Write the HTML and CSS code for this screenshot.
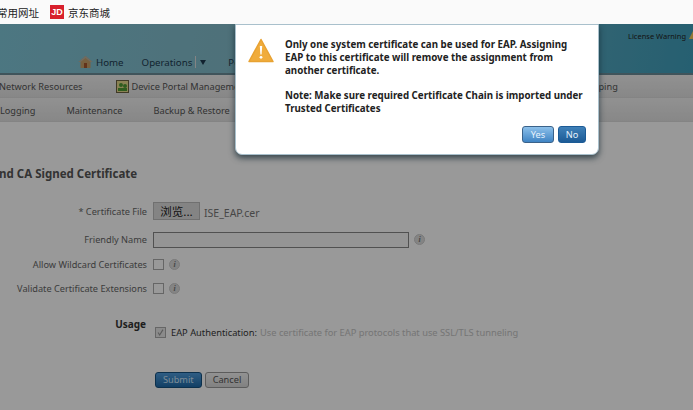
FILE: index.html
```html
<!DOCTYPE html>
<html lang="en">
<head>
    <meta charset="UTF-8">
    <meta name="viewport" content="width=device-width, initial-scale=1.0">
    <title>Bind CA Signed Certificate</title>
    <link rel="stylesheet" href="styles.css">
</head>
<body>
    <div class="bookmarks">
        <span class="bookmark first">常用网址</span>
        <span class="jd-logo">JD</span>
        <span class="bookmark">京东商城</span>
    </div>

    <div class="app">
        <div class="header">
            <div class="license">License Warning <span class="license-icon"></span></div>
            <div class="main-nav">
                <svg class="home-icon" width="15" height="14" viewBox="0 0 15 14">
                    <path d="M7.5 1 L14.5 7 L12.5 7 L12.5 13 L2.5 13 L2.5 7 L0.5 7 Z" fill="#c9a06a"/>
                    <path d="M7.5 1 L14.5 7 L12.5 7 L7.5 3 L2.5 7 L0.5 7 Z" fill="#b9b4a6"/>
                    <rect x="6" y="8" width="3" height="5" fill="#a5552e"/>
                </svg>
                <span class="nav-home">Home</span>
                <span class="nav-ops">Operations</span>
                <span class="nav-sep"></span>
                <span class="nav-arrow"></span>
                <span class="nav-policy">Policy</span>
            </div>
        </div>

        <div class="subnav first-row">
            <span class="net-res">Network Resources</span>
            <svg class="portal-icon" width="13" height="13" viewBox="0 0 13 13">
                <rect x="0.5" y="0.5" width="12" height="12" fill="#e6d98c" stroke="#6b6242"/>
                <circle cx="5" cy="5" r="2" fill="#4f9a35"/>
                <circle cx="9" cy="6" r="2" fill="#4f9a35"/>
                <rect x="2" y="8" width="9" height="3" fill="#4f9a35"/>
            </svg>
            <span>Device Portal Management</span>
            <span class="mapping">Mapping</span>
        </div>
        <div class="subnav second-row">
            <span class="logging">Logging</span>
            <span>Maintenance</span>
            <span>Backup &amp; Restore</span>
        </div>

        <div class="content">
            <h2 class="page-title">Bind CA Signed Certificate</h2>

            <div class="form-row file-row">
                <label class="form-label">* Certificate File</label>
                <span class="browse-btn">浏览...</span>
                <span class="file-name">ISE_EAP.cer</span>
            </div>
            <div class="form-row name-row">
                <label class="form-label">Friendly Name</label>
                <span class="text-input"></span>
                <span class="info-icon">i</span>
            </div>
            <div class="form-row check-row">
                <label class="form-label">Allow Wildcard Certificates</label>
                <span class="checkbox"></span>
                <span class="info-icon">i</span>
            </div>
            <div class="form-row check-row">
                <label class="form-label">Validate Certificate Extensions</label>
                <span class="checkbox"></span>
                <span class="info-icon">i</span>
            </div>

            <div class="form-row usage-row">
                <label class="form-label usage-label">Usage</label>
                <div class="usage-option">
                    <span class="checkbox checked">
                        <svg width="9" height="9" viewBox="0 0 11 11"><path d="M2.5 5.5 L4.5 8.5 L8.5 2" fill="none" stroke="#999" stroke-width="1.4"/></svg>
                    </span>
                    <span class="usage-name">EAP Authentication:</span>
                    <span class="usage-desc">Use certificate for EAP protocols that use SSL/TLS tunneling</span>
                </div>
            </div>

            <div class="form-actions">
                <span class="submit-btn">Submit</span>
                <span class="cancel-btn">Cancel</span>
            </div>
        </div>

        <div class="overlay"></div>

        <div class="dialog">
            <svg class="warn-icon" width="26" height="25" viewBox="0 0 26 25">
                <path d="M13 1.5 L25 23.5 L1 23.5 Z" fill="#f0ac3c" stroke="#e8a232" stroke-width="1.5" stroke-linejoin="round"/>
                <path d="M11.8 8 L14.2 8 L13.6 16.5 L12.4 16.5 Z" fill="#fff"/>
                <circle cx="13" cy="19.3" r="1.4" fill="#fff"/>
            </svg>
            <div class="dialog-body">
                <div class="dialog-text">
                    <p>Only one system certificate can be used for EAP. Assigning<br>EAP to this certificate will remove the assignment from<br>another certificate.</p>
                    <p>Note: Make sure required Certificate Chain is imported under<br>Trusted Certificates</p>
                </div>
                <div class="dialog-buttons">
                    <span class="yes-btn">Yes</span>
                    <span class="no-btn">No</span>
                </div>
            </div>
        </div>
    </div>
</body>
</html>
```

FILE: styles.css
```css
/* page */
html, body {
    margin: 0;
    padding: 0;
    height: 100%;
    overflow: hidden;
}

body {
    font-family: "Noto Sans", Arial, sans-serif;
    font-size: 9.2px;
    color: #666;
    background: #fff;
}

/* browser bookmarks bar */
.bookmarks {
    height: 24px;
    display: flex;
    align-items: center;
    background: #fafafa;
    color: #222;
    font-family: "Noto Sans CJK SC", sans-serif;
    font-size: 10.5px;
    overflow: hidden;
}

.bookmark.first {
    margin-left: -3px;
    margin-right: 11px;
}

.jd-logo {
    width: 14px;
    height: 14px;
    margin-right: 4px;
    background: #d8202c;
    color: #fff;
    font-family: "Liberation Sans", sans-serif;
    font-size: 9px;
    font-weight: bold;
    line-height: 14px;
    text-align: center;
}

/* app */
.app {
    position: relative;
    height: 386px;
    overflow: hidden;
    background: #fff;
}

.header {
    height: 51px;
    position: relative;
    display: flex;
    flex-direction: column;
    justify-content: flex-end;
    background: linear-gradient(100deg, #7fc6d8 0%, #85b9c6 45%, #3f9fbc 100%);
}

.license {
    position: absolute;
    top: 7px;
    left: 628px;
    font-size: 7.5px;
    color: #222;
    white-space: nowrap;
}

.license-icon {
    display: inline-block;
    margin-left: 1px;
    border-left: 4px solid transparent;
    border-right: 4px solid transparent;
    border-bottom: 8px solid #f4c95a;
}

.main-nav {
    height: 22px;
    padding-left: 78px;
    display: flex;
    align-items: center;
    font-size: 9.7px;
    color: #1d3a50;
    border-bottom: 2px solid #6c8d98;
}

.home-icon {
    margin-right: 3px;
}

.nav-ops {
    margin-left: 18px;
}

.nav-sep {
    width: 1px;
    height: 12px;
    margin-left: 3px;
    background: #ddd;
}

.nav-arrow {
    margin-left: 4px;
    border-left: 3px solid transparent;
    border-right: 3px solid transparent;
    border-top: 5px solid #1d3a50;
}

.nav-policy {
    margin-left: 22px;
}

.subnav {
    height: 22px;
    display: flex;
    align-items: center;
    color: #555;
    white-space: nowrap;
    border-bottom: 1px solid #ddd;
    background: linear-gradient(#f2f2f2, #e2e2e2);
}

.first-row .net-res {
    margin-left: -1px;
    margin-right: 33px;
}

.portal-icon {
    margin-right: 3px;
}

.mapping {
    margin-left: 331px;
}

.second-row {
    padding-top: 1px;
}

.second-row span {
    margin-right: 31px;
}

.content {
    padding-top: 45px;
}

.page-title {
    margin: 0 0 18px -12px;
    font-size: 11.5px;
    font-weight: bold;
    color: #555;
    line-height: 14px;
}

/* form */
.form-row {
    display: flex;
    align-items: center;
    height: 24px;
}

.form-label {
    width: 147px;
    margin-right: 6px;
    text-align: right;
    white-space: nowrap;
}

.browse-btn {
    width: 45px;
    height: 16px;
    line-height: 16px;
    text-align: center;
    background: #ddd;
    border: 1px solid #bbb;
    color: #222;
    font-family: "Noto Sans CJK SC", sans-serif;
    font-size: 11.5px;
}

.file-name {
    margin: 3px 0 0 4px;
    font-size: 10.5px;
    color: #777;
}

.file-row {
    margin-bottom: 4px;
}

.name-row {
    height: 25px;
}

.text-input {
    width: 254px;
    height: 14px;
    background: #f8f8f8;
    border: 1px solid #888;
}

.checkbox {
    width: 9px;
    height: 9px;
    background: #fff;
    border: 1px solid #aaa;
}

.checkbox.checked {
    display: flex;
    align-items: center;
    justify-content: center;
    background: #e8e8e8;
}

.info-icon {
    width: 9px;
    height: 9px;
    margin-left: 5px;
    border-radius: 50%;
    background: #ddd;
    border: 1px solid #ccc;
    color: #777;
    font-family: "Liberation Serif", serif;
    font-size: 8px;
    font-style: italic;
    font-weight: bold;
    line-height: 9px;
    text-align: center;
}

.usage-row {
    height: auto;
    align-items: flex-start;
    margin-top: 17px;
}

.usage-label {
    width: 146px;
    margin-right: 9px;
    font-size: 10px;
    font-weight: bold;
    color: #333;
}

.usage-option {
    display: flex;
    align-items: center;
    margin-top: 9px;
    font-size: 9.3px;
}

.usage-name {
    margin-left: 5px;
    margin-right: 3px;
    color: #383838;
}

.usage-desc {
    color: #c4c4c4;
}

.form-actions {
    display: flex;
    gap: 3px;
    margin: 33px 0 0 155px;
}

.submit-btn, .cancel-btn {
    height: 14px;
    padding: 0 7px;
    line-height: 14px;
    border-radius: 3px;
}

.submit-btn {
    background: linear-gradient(#4f9cdc, #1f6aa8);
    border: 1px solid #14507f;
    color: #cfe6fa;
}

.cancel-btn {
    background: linear-gradient(#f4f4f4, #d8d8d8);
    border: 1px solid #999;
    color: #555;
}

/* modal */
.overlay {
    position: absolute;
    inset: 0;
    background: rgba(0, 0, 0, 0.4);
}

.dialog {
    position: absolute;
    top: 0;
    left: 235px;
    width: 364px;
    height: 131px;
    box-sizing: border-box;
    padding: 13px 12px 0 12px;
    display: flex;
    background: #fff;
    border: 1px solid #a9c0cc;
    border-radius: 0 0 7px 7px;
    box-shadow: 0 3px 6px rgba(20, 40, 50, 0.75);
}

.warn-icon {
    flex: none;
    margin-right: 11px;
}

.dialog-body {
    flex: 1;
    min-width: 0;
}

.dialog-text {
    height: 88px;
    font-size: 9.75px;
    font-weight: bold;
    line-height: 13px;
    color: #222;
    white-space: nowrap;
}

.dialog-text p {
    margin: 0 0 12px 0;
}

.dialog-buttons {
    display: flex;
    justify-content: flex-end;
    gap: 4px;
}

.yes-btn, .no-btn {
    height: 15px;
    line-height: 15px;
    text-align: center;
    color: #e6f2fc;
    border-radius: 3px;
}

.yes-btn {
    width: 30px;
    background: linear-gradient(#8cc0ea, #3f84c4);
    border: 1px solid #3a628a;
}

.no-btn {
    width: 26px;
    background: linear-gradient(#3f80b8, #1c5b96);
    border: 1px solid #1c5b96;
}
```
